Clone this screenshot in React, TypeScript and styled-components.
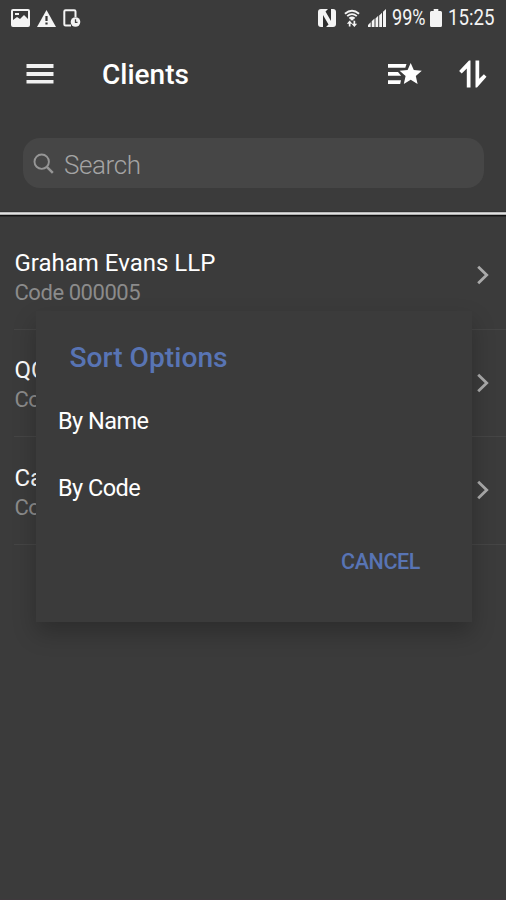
import React from 'react';
import styled, { createGlobalStyle } from 'styled-components';

const GlobalStyle = createGlobalStyle`
  * { box-sizing: border-box; }
  body { margin: 0; background: #3b3b3b; }
  button { font: inherit; color: inherit; background: none; border: 0; padding: 0; text-align: left; }
`;

const Screen = styled.div`
  position: relative;
  width: 506px;
  height: 900px;
  overflow: hidden;
  display: flex;
  flex-direction: column;
  background: #3b3b3b;
  border-bottom: 1px solid #3f393d;
  color: #fff;
  font-family: Roboto, "Liberation Sans", sans-serif;
`;

const StatusBar = styled.header`
  height: 36px;
  display: flex;
  justify-content: space-between;
  padding: 0 12px 0 11px;
  color: #f4f4f4;
`;

const StatusGroup = styled.div<{ $gap: number }>`
  display: flex;
  align-items: center;
  gap: ${(p) => p.$gap}px;
`;

const StatusText = styled.span<{ $width: number; $scale: number }>`
  width: ${(p) => p.$width}px;
  font-size: 21.5px;
  line-height: 36px;
  white-space: nowrap;
  transform: scaleX(${(p) => p.$scale});
  transform-origin: left;
`;

const Icon = styled.svg`
  display: block;
  flex: none;
`;

const AppBar = styled.div`
  height: 76px;
  display: flex;
  align-items: center;
  padding: 0 19px 0 26px;
`;

const Title = styled.h1`
  flex: 1;
  margin: 2px 0 0 48px;
  font-size: 28px;
  font-weight: 500;
  line-height: 32px;
`;

const AppActions = styled.div`
  display: flex;
  align-items: center;
  gap: 37px;
`;

const SearchArea = styled.div`
  height: 99px;
  padding: 26px 22px 0 23px;
`;

const SearchField = styled.div`
  height: 50px;
  display: flex;
  align-items: center;
  gap: 9px;
  padding: 2px 10px 0;
  border-radius: 17px;
  background: #464646;
  color: #a4a4a4;
  font-size: 26px;
  font-weight: 300;
  letter-spacing: -0.4px;
  line-height: 32px;
`;

const SearchLabel = styled.span`
  padding-top: 1px;
`;

const Rule = styled.div`
  height: 6px;
  background: linear-gradient(#333 0 1px, #bcbcbc 1px 2px, #e2e2e2 2px 3px, #adadad 3px 4px, #111 4px 5px, #292929 5px);
`;

const ClientList = styled.main`
  padding-top: 5px;
`;

const ClientRow = styled.div`
  height: 107.5px;
  margin-left: 14px;
  padding-right: 17px;
  display: flex;
  align-items: center;
  border-bottom: 1px solid #454545;
`;

const ClientText = styled.div`
  flex: 1;
  padding: 2.5px 0 0 0.5px;
`;

const ClientName = styled.div`
  font-size: 24px;
  line-height: 32px;
`;

const ClientCode = styled.div`
  font-size: 22px;
  letter-spacing: -0.45px;
  line-height: 28px;
  color: #8b8b8b;
`;

const Dialog = styled.section`
  position: absolute;
  left: 36px;
  top: 311px;
  width: 436px;
  height: 311px;
  padding: 30px 52px 0 22px;
  display: flex;
  flex-direction: column;
  background: #3b3b3b;
  box-shadow: 0 11px 22px rgba(0, 0, 0, 0.24);
`;

const DialogTitle = styled.h2`
  margin: 0 0 12px 11.5px;
  font-size: 28.2px;
  font-weight: 500;
  line-height: 34px;
  color: #5874b4;
`;

const Option = styled.button`
  height: 67.5px;
  font-size: 23.5px;
  letter-spacing: -0.55px;
  line-height: 30px;
`;

const Cancel = styled.button`
  align-self: flex-end;
  margin-top: 26px;
  font-size: 21.5px;
  letter-spacing: -0.4px;
  font-weight: 500;
  line-height: 28px;
  color: #5874b4;
`;

const clients = [
  { name: 'Graham Evans LLP', code: 'Code 000005' },
  { name: 'QC', code: 'Code' },
  { name: 'Ca', code: 'Code' },
];

const PictureIcon = () => (
  <Icon width="19" height="18" viewBox="0 0 19 18" fill="currentColor">
    <path fillRule="evenodd" d="M2 0h15q2 0 2 2v14q0 2-2 2H2q-2 0-2-2V2Q0 0 2 0Zm0 2v9l4-3 3 2 4-4 4 4V2Z" />
    <path d="M4 4h4v2H4z" />
  </Icon>
);

const WarningIcon = () => (
  <Icon width="19" height="17" viewBox="0 0 19 17">
    <path d="M9.5 0 19 17H0Z" fill="currentColor" />
    <path d="M8.4 6h2.2v5H8.4zM8.4 12.5h2.2v2H8.4z" fill="#333" />
  </Icon>
);

const DeviceIcon = () => (
  <Icon width="18" height="19" viewBox="0 0 18 19">
    <path d="M12.5 8V2.5q0-1.3-1.3-1.3H2.6q-1.3 0-1.3 1.3v12.7q0 1.3 1.3 1.3H8" fill="none" stroke="currentColor" strokeWidth="2" />
    <circle cx="12.5" cy="13" r="4.8" fill="currentColor" />
    <path d="M12.5 10.3v3h2" stroke="#444" strokeWidth="1.3" fill="none" />
  </Icon>
);

const NfcIcon = () => (
  <Icon width="18" height="18" viewBox="0 0 18 18">
    <rect width="18" height="18" rx="3" fill="currentColor" />
    <path d="M5 6 10.500 15.500 8 18H5ZM13 12 7.500 2.500 10 0h3Z" fill="#303030" />
    <path d="M6.800 10.500 9 14.800 6.800 18ZM11.200 7.500 9 3.200 11.200 0Z" fill="#303030" />
  </Icon>
);

const WifiIcon = () => (
  <Icon width="16" height="19" viewBox="0 0 17 19" fill="none" stroke="currentColor">
    <path d="M1 4.5Q8.5-2 16 4.5M3.4 7Q8.5 2.7 13.6 7M5.7 9.5q2.8-2.3 5.6 0" strokeWidth="2" />
    <path d="M8.5 8.500v3" strokeWidth="3" />
    <path d="M3 15 6 11.7 9 15ZM8 15l3 3.5 3-3.500Z" fill="currentColor" stroke="none" />
    <path d="M6 14v4M11 12v4" strokeWidth="1.8" />
  </Icon>
);

const SignalIcon = () => (
  <Icon width="18" height="18" viewBox="0 0 18 18" fill="currentColor">
    <path d="M0 18v-2l2.700-2.700V18zM3.700 18v-5.700L6.500 9.500V18zM7.500 18V9.500l2.700-2.700V18zM11.200 18V6.500L14 3.700V18zM15 18V2.700L18 0v18z" />
  </Icon>
);

const BatteryIcon = () => (
  <Icon width="12" height="18" viewBox="0 0 13 18" preserveAspectRatio="none" fill="currentColor">
    <path d="M4 0h5v2h2.5q1.5 0 1.5 1.5v13q0 1.500-1.500 1.500h-10Q0 18 0 16.500v-13Q0 2 1.500 2H4Z" />
  </Icon>
);

const MenuIcon = () => (
  <Icon width="28" height="20" viewBox="0 0 28 20" fill="#f1f1f1">
    <path d="M.5 0h27v4H.5zM.5 8h27v4H.5zM.5 16h27v3.500H.5z" />
  </Icon>
);

const FilterStarIcon = () => (
  <Icon width="34" height="22" viewBox="0 0 34 22" fill="#fff">
    <path d="M0 1h18.500l-1.200 3.800H0zM0 9h10l3.200 3.800H0zM0 17.200h13l-.8 3.800H0z" />
    <path d="m22.700 0 3.100 7 8 .7-6 5.200 1.800 8.100-6.900-4.200-6.900 4.200 1.800-8.100-6-5.200 8-.7Z" />
  </Icon>
);

const SortIcon = () => (
  <Icon width="28" height="28" viewBox="0 0 28 28" fill="#fff">
    <path d="M11.500 .5V27.500H7.800V8.500L2.700 13.500.1 11 10 .5Z" />
    <path d="M16.500 .5h3.700V18.700l4.700-4.500 2.600 2.500-9.500 10.800h-1.500Z" />
  </Icon>
);

const SearchIcon = () => (
  <Icon width="22" height="22" viewBox="0 0 22 22" fill="none" stroke="#969696">
    <circle cx="8.700" cy="8.700" r="7.200" strokeWidth="1.900" />
    <path d="m13.800 13.800 6 6" strokeWidth="2.500" />
  </Icon>
);

const ChevronIcon = () => (
  <Icon width="13" height="20" viewBox="0 0 13 20" fill="none" stroke="#aaa">
    <path d="m2.200 1.700 8.500 8.300-8.500 8.300" strokeWidth="2.800" />
  </Icon>
);

export default function App() {
  return (
    <>
      <GlobalStyle />
      <Screen>
        <StatusBar>
          <StatusGroup $gap={7}>
            <PictureIcon />
            <WarningIcon />
            <DeviceIcon />
          </StatusGroup>
          <StatusGroup $gap={6}>
            <StatusGroup $gap={8}>
              <NfcIcon />
              <WifiIcon />
              <SignalIcon />
            </StatusGroup>
            <StatusGroup $gap={4}>
              <StatusText $width={34} $scale={0.84}>99%</StatusText>
              <BatteryIcon />
            </StatusGroup>
            <StatusText $width={46} $scale={0.87}>15:25</StatusText>
          </StatusGroup>
        </StatusBar>
        <AppBar>
          <MenuIcon />
          <Title>Clients</Title>
          <AppActions>
            <FilterStarIcon />
            <SortIcon />
          </AppActions>
        </AppBar>
        <SearchArea>
          <SearchField>
            <SearchIcon />
            <SearchLabel>Search</SearchLabel>
          </SearchField>
        </SearchArea>
        <Rule />
        <ClientList>
          {clients.map((client) => (
            <ClientRow key={client.name}>
              <ClientText>
                <ClientName>{client.name}</ClientName>
                <ClientCode>{client.code}</ClientCode>
              </ClientText>
              <ChevronIcon />
            </ClientRow>
          ))}
        </ClientList>
        <Dialog role="dialog">
          <DialogTitle>Sort Options</DialogTitle>
          <Option>By Name</Option>
          <Option>By Code</Option>
          <Cancel>CANCEL</Cancel>
        </Dialog>
      </Screen>
    </>
  );
}
